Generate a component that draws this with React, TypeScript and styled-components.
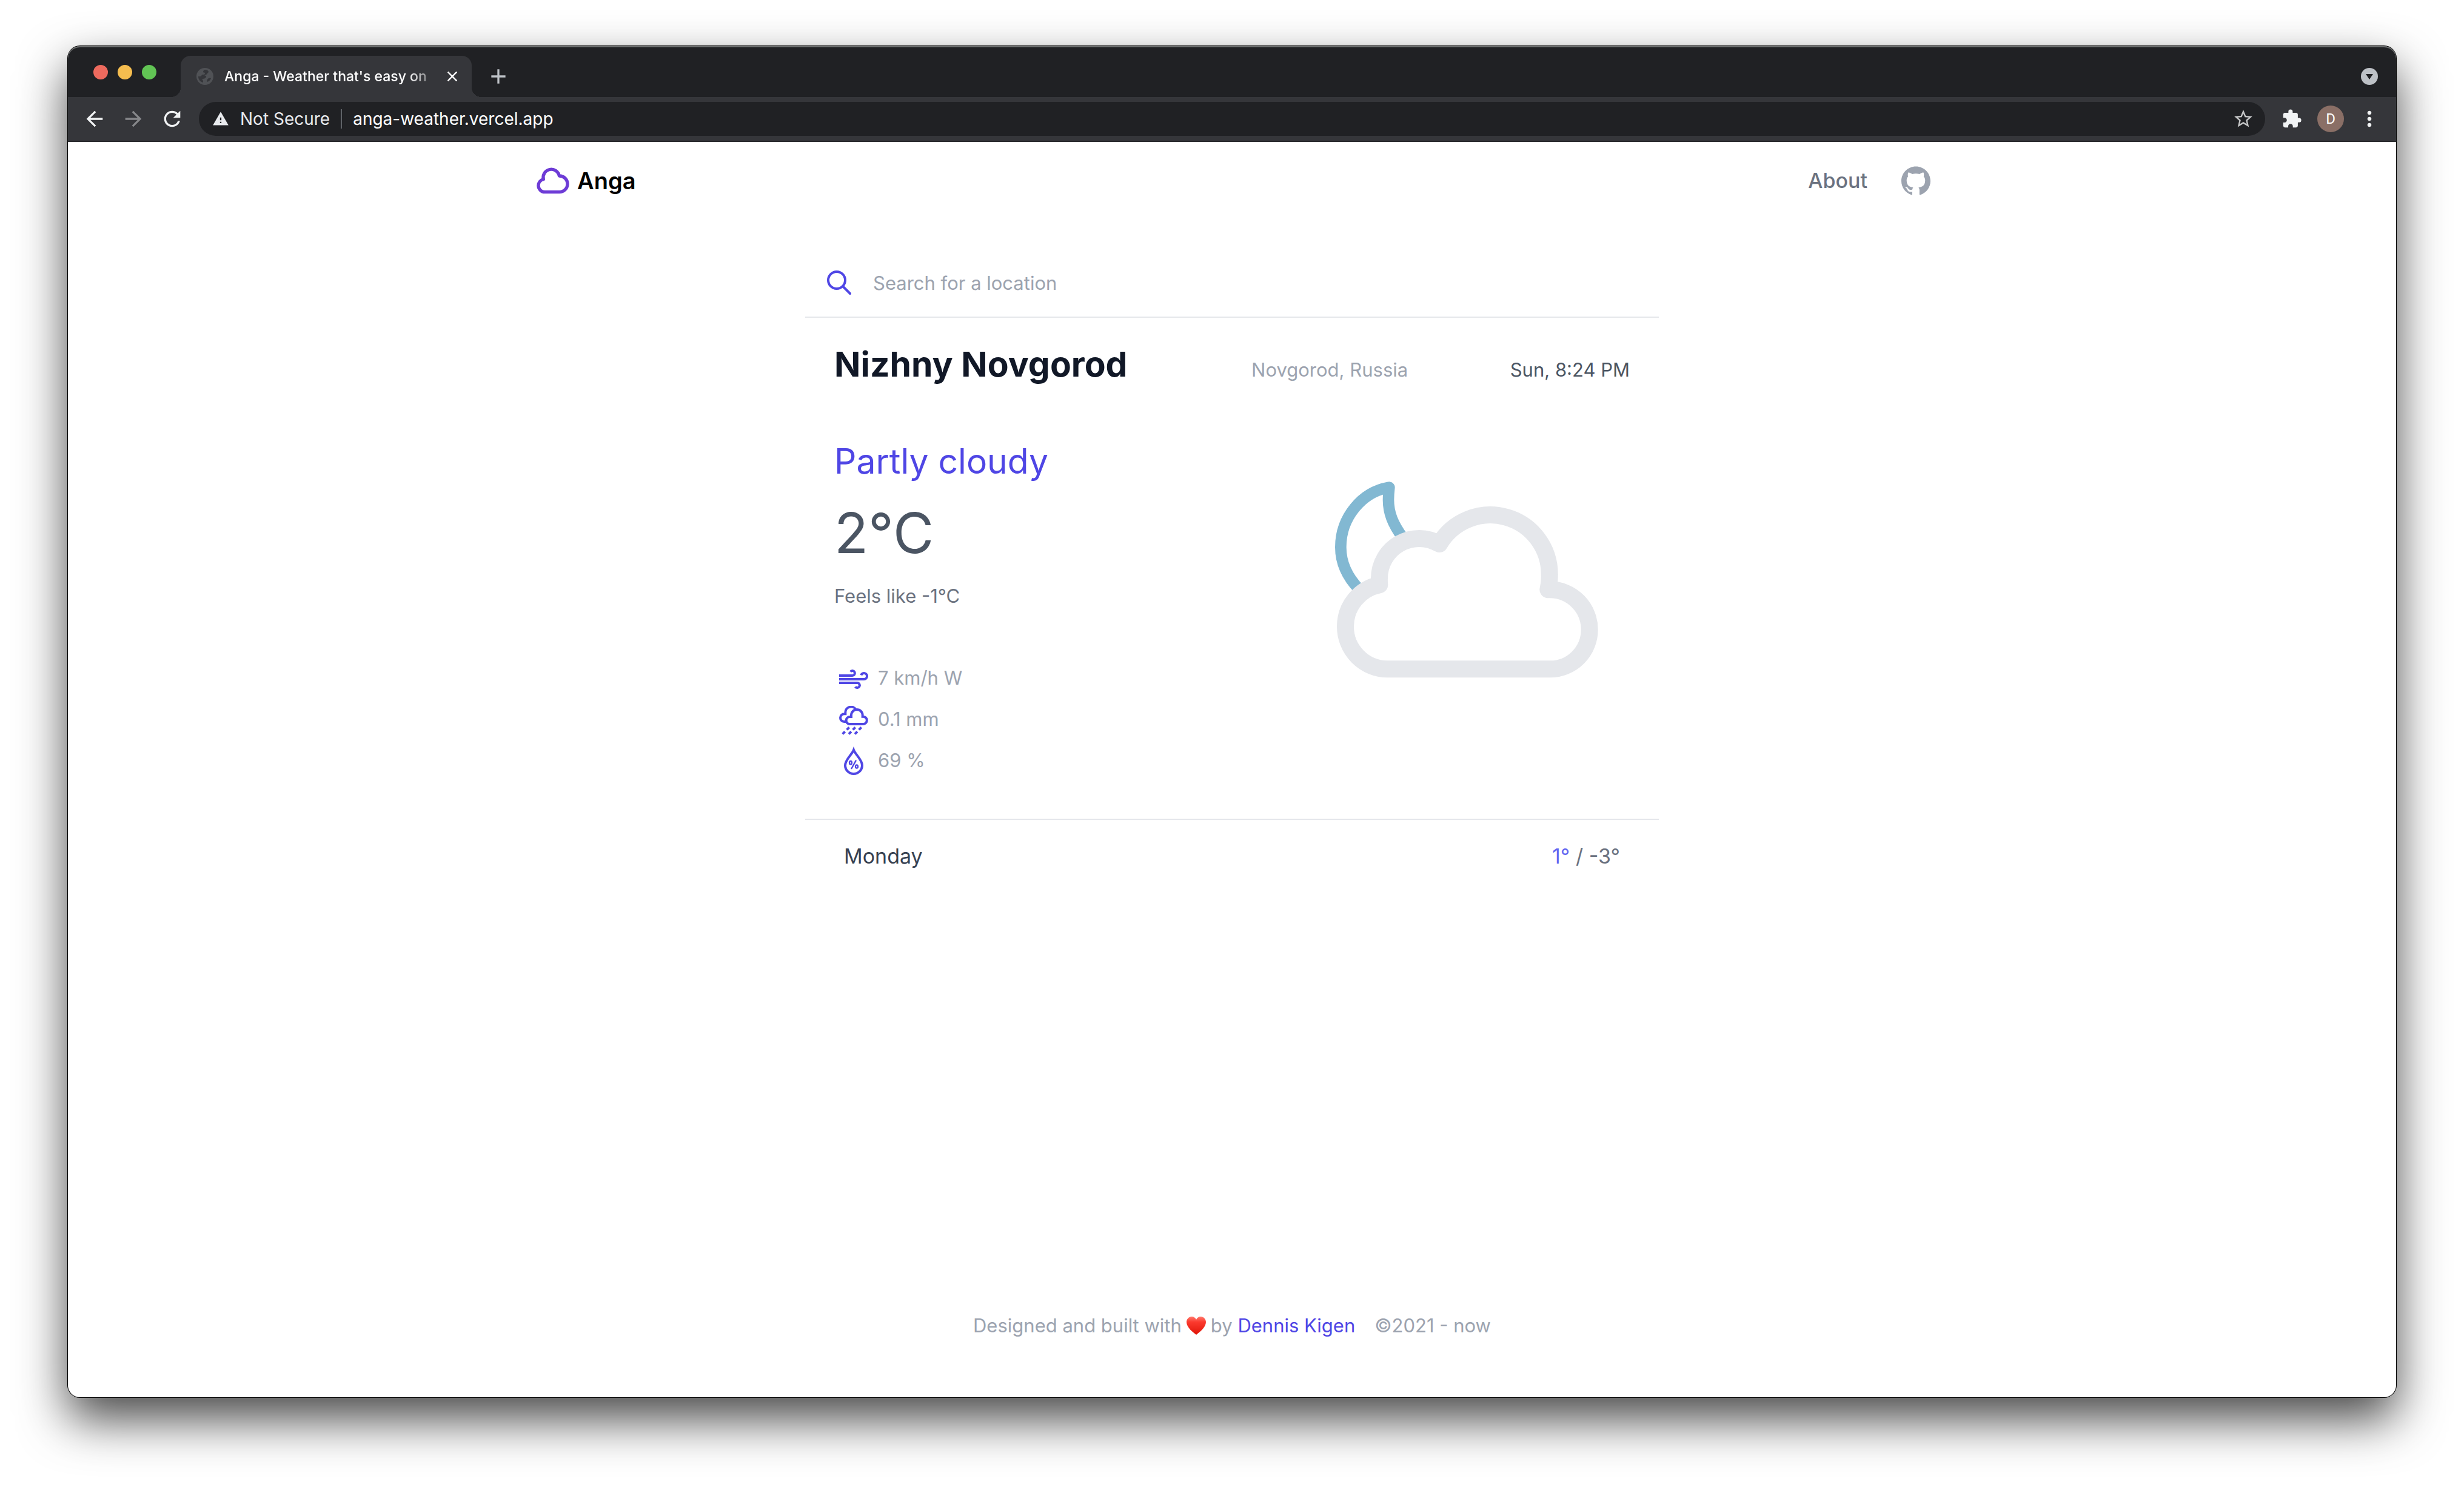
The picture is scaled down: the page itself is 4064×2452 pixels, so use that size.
import React from "react";
import styled, { createGlobalStyle } from "styled-components";
import {
  MdAdd,
  MdArrowBack,
  MdArrowForward,
  MdClose,
  MdExtension,
  MdMoreVert,
  MdRefresh,
  MdStarBorder,
  MdWarning,
} from "react-icons/md";

const color = {
  strip: "#202124",
  toolbar: "#35363a",
  indigo: "#4f46e5",
  line: "#e5e7eb",
  gray400: "#9ca3af",
  gray500: "#6b7280",
  gray600: "#4b5563",
  gray700: "#374151",
  gray900: "#111827",
};

const GlobalStyle = createGlobalStyle`
  *, *::before, *::after { box-sizing: border-box; }
  body {
    margin: 0;
    background: #fff;
    font-family: Inter, "Liberation Sans", sans-serif;
    font-size: 31px;
    line-height: 48px;
  }
  h1, h2, p, ul, dl, dd { margin: 0; padding: 0; }
  button, input { font: inherit; color: inherit; border: 0; padding: 0; background: none; }
  button { cursor: pointer; }
  a { color: inherit; text-decoration: none; }
  svg { display: block; flex: none; }
`;

const Desktop = styled.div`
  display: flex;
  min-height: 100vh;
  padding: 76px 112px 148px;
  overflow: hidden;
`;

const Window = styled.div`
  flex: 1;
  display: flex;
  flex-direction: column;
  min-width: 0;
  border-radius: 20px;
  background: #fff;
  box-shadow: 0 0 0 1px #000, 0 36px 80px rgba(0, 0, 0, 0.72);
`;

const Chrome = styled.header`
  border-radius: 20px 20px 0 0;
  overflow: hidden;
  background: ${color.strip};
  box-shadow: inset 0 2px #6a6c6c;
`;

const TabStrip = styled.div`
  display: flex;
  height: 84px;
  padding: 16px 24px 0 42px;
`;

const Lights = styled.div`
  display: flex;
  align-items: center;
  gap: 16px;
  height: 54px;
  margin-right: 40px;
`;

const Light = styled.button<{ $tone: string }>`
  width: 24px;
  height: 24px;
  border-radius: 50%;
  background: ${(p) => p.$tone};
`;

const Tab = styled.div`
  position: relative;
  display: flex;
  align-items: center;
  gap: 18px;
  width: 480px;
  padding: 0 18px 0 26px;
  border-radius: 16px 16px 0 0;
  background: ${color.toolbar};

  &::before,
  &::after {
    content: "";
    position: absolute;
    bottom: 0;
    width: 16px;
    height: 16px;
  }
  &::before {
    right: 100%;
    background: radial-gradient(circle at 0 0, transparent 16px, ${color.toolbar} 16px);
  }
  &::after {
    left: 100%;
    background: radial-gradient(circle at 100% 0, transparent 16px, ${color.toolbar} 16px);
  }
`;

const TabTitle = styled.span`
  flex: 1;
  white-space: nowrap;
  font-size: 23px;
  font-weight: 500;
  color: #fff;
  mask-image: linear-gradient(to right, #000 88%, transparent 104%);
`;

const IconButton = styled.button<{ $size?: number; $tone?: string }>`
  display: flex;
  flex: none;
  align-items: center;
  justify-content: center;
  width: ${(p) => p.$size ?? 40}px;
  height: ${(p) => p.$size ?? 40}px;
  color: ${(p) => p.$tone ?? "#f1f3f4"};
`;

const StripActions = styled.div`
  flex: 1;
  display: flex;
  align-items: center;
  justify-content: space-between;
  padding-left: 24px;
`;

const Toolbar = styled.div`
  display: flex;
  align-items: center;
  gap: 24px;
  padding: 8px 24px;
  background: ${color.toolbar};
  border-bottom: 2px solid #28292c;
`;

const Omnibox = styled.div`
  flex: 1;
  display: flex;
  align-items: center;
  gap: 18px;
  height: 56px;
  padding: 0 18px 0 22px;
  border-radius: 28px;
  background: ${color.strip};
  color: #e8eaed;
  font-size: 28px;
`;

const Divider = styled.span`
  width: 2px;
  height: 32px;
  background: #5f6368;
`;

const Address = styled.input`
  flex: 1;
  min-width: 0;
  color: #fff;
  outline: none;
`;

const Avatar = styled.button`
  width: 44px;
  height: 44px;
  margin: 0 -2px;
  border-radius: 50%;
  background: #8a6f66;
  color: #fff;
  font-family: Roboto, sans-serif;
  font-size: 24px;
  line-height: 44px;
`;

const Page = styled.div`
  flex: 1;
  display: flex;
  flex-direction: column;
  align-items: center;
`;

const Nav = styled.nav`
  display: flex;
  align-items: center;
  justify-content: space-between;
  width: 100%;
  max-width: 2304px;
  padding-top: 32px;
`;

const Brand = styled.a`
  display: flex;
  align-items: center;
  gap: 8px;
  font-size: 38px;
  font-weight: 600;
  color: #000;
`;

const NavLinks = styled.div`
  display: flex;
  align-items: center;
  gap: 56px;
  font-size: 34px;
  font-weight: 500;
  color: ${color.gray500};
`;

const GithubLink = styled.a`
  color: ${color.gray400};
`;

const Card = styled.main`
  flex: 1;
  width: 100%;
  max-width: 1408px;
  padding-top: 112px;
`;

const SearchBar = styled.form`
  display: flex;
  align-items: center;
  gap: 32px;
  padding: 0 32px 32px;
  border-bottom: 2px solid ${color.line};
  color: ${color.indigo};
`;

const SearchLabel = styled.label`
  display: flex;
`;

const SearchInput = styled.input`
  flex: 1;
  height: 48px;
  padding-top: 2px;
  color: ${color.gray700};
  outline: none;
  &::placeholder {
    color: ${color.gray400};
    opacity: 1;
  }
`;

const Current = styled.section`
  padding: 41px 48px 70px;
  border-bottom: 2px solid ${color.line};
`;

const PlaceRow = styled.div`
  display: flex;
  align-items: baseline;
  justify-content: space-between;
`;

const City = styled.h1`
  padding-right: 36px;
  font-size: 57px;
  line-height: 72px;
  font-weight: 700;
  color: ${color.gray900};
`;

const Region = styled.span`
  color: ${color.gray400};
`;

const LocalTime = styled.time`
  color: ${color.gray600};
`;

const Conditions = styled.div`
  display: grid;
  grid-template-columns: 1fr 1fr;
  padding-top: 88px;
`;

const Summary = styled.h2`
  font-size: 57px;
  line-height: 72px;
  font-weight: 400;
  color: ${color.indigo};
`;

const Temperature = styled.p`
  padding: 34px 0 32px;
  font-size: 92px;
  line-height: 96px;
  color: ${color.gray600};
`;

const FeelsLike = styled.p`
  color: ${color.gray500};
`;

const Metrics = styled.ul`
  display: grid;
  gap: 16px;
  padding: 85px 8px 0;
  line-height: 52px;
  list-style: none;
  color: ${color.gray400};
`;

const Metric = styled.li`
  display: flex;
  gap: 16px;
  svg {
    align-self: flex-end;
    color: ${color.indigo};
  }
`;

const Artwork = styled.div`
  display: flex;
  justify-content: flex-end;
  align-items: flex-start;
  padding: 66px 48px 0 0;
`;

const Forecast = styled.dl`
  display: flex;
  justify-content: space-between;
  padding: 32px 64px;
  font-size: 34px;
  line-height: 56px;
`;

const Day = styled.dt`
  color: ${color.gray700};
`;

const Range = styled.dd`
  color: ${color.gray500};
`;

const High = styled.span`
  color: #6366f1;
`;

const Footer = styled.footer`
  display: flex;
  justify-content: center;
  gap: 32px;
  padding-bottom: 94px;
  color: ${color.gray400};
`;

const Credit = styled.p`
  display: flex;
  align-items: center;
  gap: 8px;
`;

const AuthorLink = styled.a`
  color: ${color.indigo};
`;

const Favicon = () => (
  <svg width="28" height="28" viewBox="0 0 28 28" aria-hidden="true">
    <circle cx="14" cy="14" r="14" fill="#505256" />
    <path
      d="M15 3c-3 0-4 2-4 4 1 1 3 0 3 2s-2 2-4 2c-2 0-1 3-4 3H3c0 5 3 9 8 10v-3c-1-1-2-2-1-3 3 0 5-1 6-3 1-2-2-2-3-3 2-1 5-1 5-3 0-1 2-1 2-3-1-2-3-3-5-3z"
      fill="#35363a"
    />
    <path d="M18 19c1-2 4-3 6-2-1 3-3 5-6 6-1-1-1-3 0-4z" fill="#35363a" />
  </svg>
);

const TabSearchIcon = () => (
  <svg width="28" height="28" viewBox="0 0 28 28" aria-hidden="true">
    <circle cx="14" cy="14" r="14" fill="#bdc1c6" />
    <path d="M8 10h12l-6 9z" fill="#202124" />
  </svg>
);

const CloudLogo = () => (
  <svg width="64" height="64" viewBox="0 0 24 24" fill="none" stroke="#6d3bd6" strokeWidth="2" strokeLinecap="round" strokeLinejoin="round" aria-hidden="true">
    <path d="M3 15a4 4 0 004 4h9a5 5 0 10-.1-9.999 5.002 5.002 0 10-9.78 2.096A4.001 4.001 0 003 15z" />
  </svg>
);

const GithubMark = () => (
  <svg width="48" height="48" viewBox="0 0 24 24" fill="currentColor" aria-hidden="true">
    <path d="M12 .297c-6.63 0-12 5.373-12 12 0 5.303 3.438 9.8 8.205 11.385.6.113.82-.258.82-.577 0-.285-.01-1.04-.015-2.04-3.338.724-4.042-1.61-4.042-1.61C4.422 18.07 3.633 17.7 3.633 17.7c-1.087-.744.084-.729.084-.729 1.205.084 1.838 1.236 1.838 1.236 1.07 1.835 2.809 1.305 3.495.998.108-.776.417-1.305.76-1.605-2.665-.3-5.466-1.332-5.466-5.93 0-1.31.465-2.38 1.235-3.22-.135-.303-.54-1.523.105-3.176 0 0 1.005-.322 3.3 1.23.96-.267 1.98-.399 3-.405 1.02.006 2.04.138 3 .405 2.28-1.552 3.285-1.23 3.285-1.23.645 1.653.24 2.873.12 3.176.765.84 1.23 1.91 1.23 3.22 0 4.61-2.805 5.625-5.475 5.92.42.36.81 1.096.81 2.22 0 1.606-.015 2.896-.015 3.286 0 .315.21.69.825.57C20.565 22.092 24 17.592 24 12.297c0-6.627-5.373-12-12-12" />
  </svg>
);

const SearchIcon = () => (
  <svg width="48" height="48" viewBox="0 0 24 24" fill="none" stroke="currentColor" strokeWidth="2" strokeLinecap="round" strokeLinejoin="round" aria-hidden="true">
    <path d="M21 21l-6-6m2-5a7 7 0 11-14 0 7 7 0 0114 0z" />
  </svg>
);

const WindIcon = () => (
  <svg width="48" height="48" viewBox="0 0 144 144" fill="none" stroke="currentColor" strokeWidth="12" aria-hidden="true">
    <path d="M0 54H66A12 12 0 1 0 56 35" />
    <path d="M0 72H123A15 15 0 1 0 109 52" />
    <path d="M0 90H90A12 12 0 1 1 80 109" />
  </svg>
);

const RainIcon = () => (
  <svg width="48" height="48" viewBox="0 0 144 144" fill="none" stroke="currentColor" strokeWidth="12" aria-hidden="true">
    <path d="M53 90A18 18 0 0 1 53 54H60V46A28 28 0 0 1 116 46V53H119A18.5 18.5 0 0 1 119 90Z" />
    <path d="M37 78H25A19 19 0 0 1 25 40H31V34A28 28 0 0 1 83 18" />
    <path d="M38 118l12-12M68 118l12-12M98 118l12-12M17 139l12-12M48 139l12-12M78 139l12-12" />
  </svg>
);

const HumidityIcon = () => (
  <svg width="48" height="48" viewBox="0 6 144 144" overflow="visible" fill="none" stroke="currentColor" strokeWidth="12" aria-hidden="true">
    <path d="M72 20C64 42 30 68 30 96a42 42 0 0 0 84 0C114 68 80 42 72 20Z" strokeMiterlimit="10" />
    <path d="M60 114L84 71" strokeWidth="7" />
    <ellipse cx="57" cy="83" rx="6" ry="8" strokeWidth="7" />
    <ellipse cx="87" cy="102" rx="6" ry="8" strokeWidth="7" />
  </svg>
);

const PartlyCloudyNight = () => (
  <svg width="440" height="330" viewBox="120 90 1320 990" role="img" aria-label="Partly cloudy night" strokeLinejoin="round">
    <path
      d="M460 375C412 310 390 255 390 190C390 165 392 145 394 128C260 150 154 275 154 424C154 500 183 568 245 632"
      fill="none"
      stroke="#82b8d2"
      strokeWidth="56"
    />
    <path
      d="M385 1027A210 210 0 0 1 177 817A210 210 0 0 1 346 610A197 197 0 0 1 345 577A197 197 0 0 1 642 408A293 293 0 0 1 1187 560A293 293 0 0 1 1180 634H1190A197 197 0 0 1 1385 832A195 195 0 0 1 1190 1027Z"
      fill="#fff"
      stroke="#e5e7eb"
      strokeWidth="84"
    />
  </svg>
);

const HeartIcon = () => (
  <svg width="32" height="30" viewBox="0 0 32 30" role="img" aria-label="love">
    <defs>
      <linearGradient id="heart" x1="0" y1="0" x2="0" y2="1">
        <stop offset="0" stopColor="#ff7a6e" />
        <stop offset="0.3" stopColor="#fb3a2e" />
        <stop offset="1" stopColor="#e01508" />
      </linearGradient>
    </defs>
    <path d="M16 30C11 26 0 18 0 9C0 4 4 0 8.500 0C12 0 15 2 16 5C17 2 20 0 23.500 0C28 0 32 4 32 9C32 18 21 26 16 30Z" fill="url(#heart)" />
  </svg>
);

const metrics = [
  { name: "Wind", value: "7 km/h W", Icon: WindIcon },
  { name: "Precipitation", value: "0.1 mm", Icon: RainIcon },
  { name: "Humidity", value: "69 %", Icon: HumidityIcon },
];

function BrowserChrome() {
  return (
    <Chrome>
      <TabStrip>
        <Lights>
          <Light $tone="#ed6a5e" aria-label="Close window" />
          <Light $tone="#f5bd4f" aria-label="Minimise window" />
          <Light $tone="#61c454" aria-label="Zoom window" />
        </Lights>
        <Tab>
          <Favicon />
          <TabTitle>Anga - Weather that's easy on</TabTitle>
          <IconButton $size={28} $tone="#fff" aria-label="Close tab">
            <MdClose size={28} />
          </IconButton>
        </Tab>
        <StripActions>
          <IconButton $tone="#bdc1c6" aria-label="New tab">
            <MdAdd size={40} />
          </IconButton>
          <IconButton aria-label="Search tabs">
            <TabSearchIcon />
          </IconButton>
        </StripActions>
      </TabStrip>
      <Toolbar>
        <IconButton aria-label="Back">
          <MdArrowBack size={40} />
        </IconButton>
        <IconButton $tone="#86878a" aria-label="Forward">
          <MdArrowForward size={40} />
        </IconButton>
        <IconButton aria-label="Reload">
          <MdRefresh size={40} />
        </IconButton>
        <Omnibox>
          <MdWarning size={28} />
          <span>Not Secure</span>
          <Divider />
          <Address aria-label="Address" defaultValue="anga-weather.vercel.app" />
          <IconButton $size={36} $tone="#c4c5c6" aria-label="Bookmark this page">
            <MdStarBorder size={36} />
          </IconButton>
        </Omnibox>
        <IconButton aria-label="Extensions">
          <MdExtension size={34} />
        </IconButton>
        <Avatar>D</Avatar>
        <IconButton aria-label="Menu">
          <MdMoreVert size={40} />
        </IconButton>
      </Toolbar>
    </Chrome>
  );
}

export default function App() {
  return (
    <>
      <GlobalStyle />
      <Desktop>
        <Window>
          <BrowserChrome />
          <Page>
            <Nav>
              <Brand href="#home">
                <CloudLogo />
                Anga
              </Brand>
              <NavLinks>
                <a href="#about">About</a>
                <GithubLink href="#github" aria-label="GitHub">
                  <GithubMark />
                </GithubLink>
              </NavLinks>
            </Nav>
            <Card>
              <SearchBar>
                <SearchLabel htmlFor="location" aria-label="Location">
                  <SearchIcon />
                </SearchLabel>
                <SearchInput id="location" type="text" placeholder="Search for a location" />
              </SearchBar>
              <Current>
                <PlaceRow>
                  <City>Nizhny Novgorod</City>
                  <Region>Novgorod, Russia</Region>
                  <LocalTime>Sun, 8:24 PM</LocalTime>
                </PlaceRow>
                <Conditions>
                  <div>
                    <Summary>Partly cloudy</Summary>
                    <Temperature>2°C</Temperature>
                    <FeelsLike>Feels like -1°C</FeelsLike>
                    <Metrics>
                      {metrics.map(({ name, value, Icon }) => (
                        <Metric key={name} aria-label={name}>
                          <Icon />
                          {value}
                        </Metric>
                      ))}
                    </Metrics>
                  </div>
                  <Artwork>
                    <PartlyCloudyNight />
                  </Artwork>
                </Conditions>
              </Current>
              <Forecast>
                <Day>Monday</Day>
                <Range>
                  <High>1°</High> / -3°
                </Range>
              </Forecast>
            </Card>
            <Footer>
              <Credit>
                <span>Designed and built with</span>
                <HeartIcon />
                <span>
                  by <AuthorLink href="#author">Dennis Kigen</AuthorLink>
                </span>
              </Credit>
              <p>©2021 - now</p>
            </Footer>
          </Page>
        </Window>
      </Desktop>
    </>
  );
}
